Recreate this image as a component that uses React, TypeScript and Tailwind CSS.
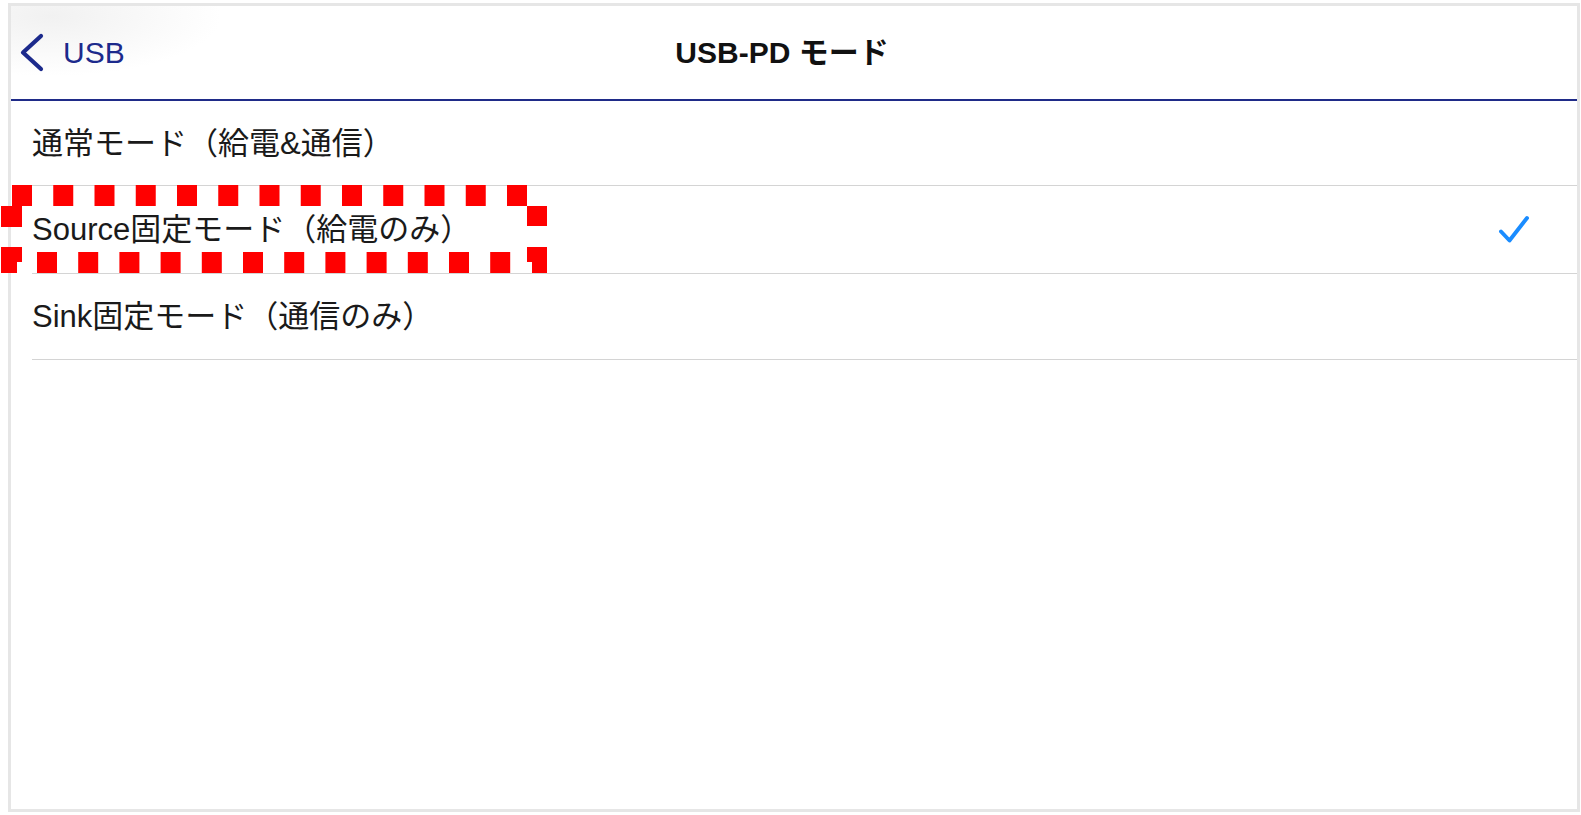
import React from 'react';

const rows = [
  { label: '通常モード（給電&通信）', checked: false, h: 'h-[85px]' },
  { label: 'Source固定モード（給電のみ）', checked: true, h: 'h-[88px]' },
  { label: 'Sink固定モード（通信のみ）', checked: false, h: 'h-[86px]' },
];

// red dashed annotation around the selected row
const DashedMarker = () => {
  const top = Array.from({ length: 13 }, (_, i) => 11 + i * 41.25);
  const bottom = Array.from({ length: 12 }, (_, i) => 36 + i * 41.2);
  return (
    <svg className="absolute left-[1px] top-[185px]" width="547" height="88" viewBox="0 0 547 88">
      <g fill="#ff0000">
        {top.map((x) => (
          <rect key={'t' + x} x={x} y={0} width={20} height={21} />
        ))}
        {bottom.map((x) => (
          <rect key={'b' + x} x={x} y={67} width={20} height={21} />
        ))}
        <rect x={0} y={21} width={21} height={21} />
        <rect x={526} y={21} width={20} height={20} />
        <rect x={0} y={62} width={21} height={15} />
        <rect x={0} y={77} width={16} height={11} />
        <rect x={526} y={62} width={20} height={15} />
        <rect x={531} y={77} width={15} height={11} />
      </g>
    </svg>
  );
};

export default function App() {
  return (
    <div className="relative h-[815px] w-[1581px] bg-white font-['Liberation_Sans','Noto_Sans_CJK_JP',sans-serif]">
      <div className="ml-[8px] pt-[3px]">
        <div className="flex h-[809px] w-[1572px] flex-col border-[3px] border-[#e6e6e6] bg-white">
          {/* NAV BAR */}
          <div className="grid h-[93px] grid-cols-[1fr_auto_1fr] items-center bg-[radial-gradient(ellipse_170px_60px_at_40px_10px,#f1f1f1,#ffffff)] pr-[24px]">
            <div className="flex items-center gap-[18px] pl-[8px]">
              <svg width="26" height="40" viewBox="0 0 26 40" fill="none">
                <path d="M22 3 L4 19.5 L22 36" stroke="#1c2a8c" strokeWidth="4.2" strokeLinecap="round" strokeLinejoin="round" />
              </svg>
              <span className="text-[30px] leading-none text-[#1c2a8c]">USB</span>
            </div>
            <div className="text-[30px] font-bold leading-none text-[#111]">USB-PD モード</div>
            <div />
          </div>
          <div className="h-[2px] bg-[#1f2b88]" />

          {/* OPTIONS */}
          <div className="ml-[21px]">
            {rows.map((r) => (
              <div
                key={r.label}
                className={`flex ${r.h} items-center justify-between border-b border-[#d4d4d4] pr-[46px]`}
              >
                <span className="text-[31px] leading-none text-[#1a1a1a]">{r.label}</span>
                {r.checked && (
                  <svg width="33" height="29" viewBox="0 0 33 29" fill="none">
                    <path d="M3 16.5 L11.5 25.5 L29 3" stroke="#1a8cff" strokeWidth="3.9" strokeLinecap="round" strokeLinejoin="round" />
                  </svg>
                )}
              </div>
            ))}
          </div>
        </div>
      </div>
      <DashedMarker />
    </div>
  );
}
